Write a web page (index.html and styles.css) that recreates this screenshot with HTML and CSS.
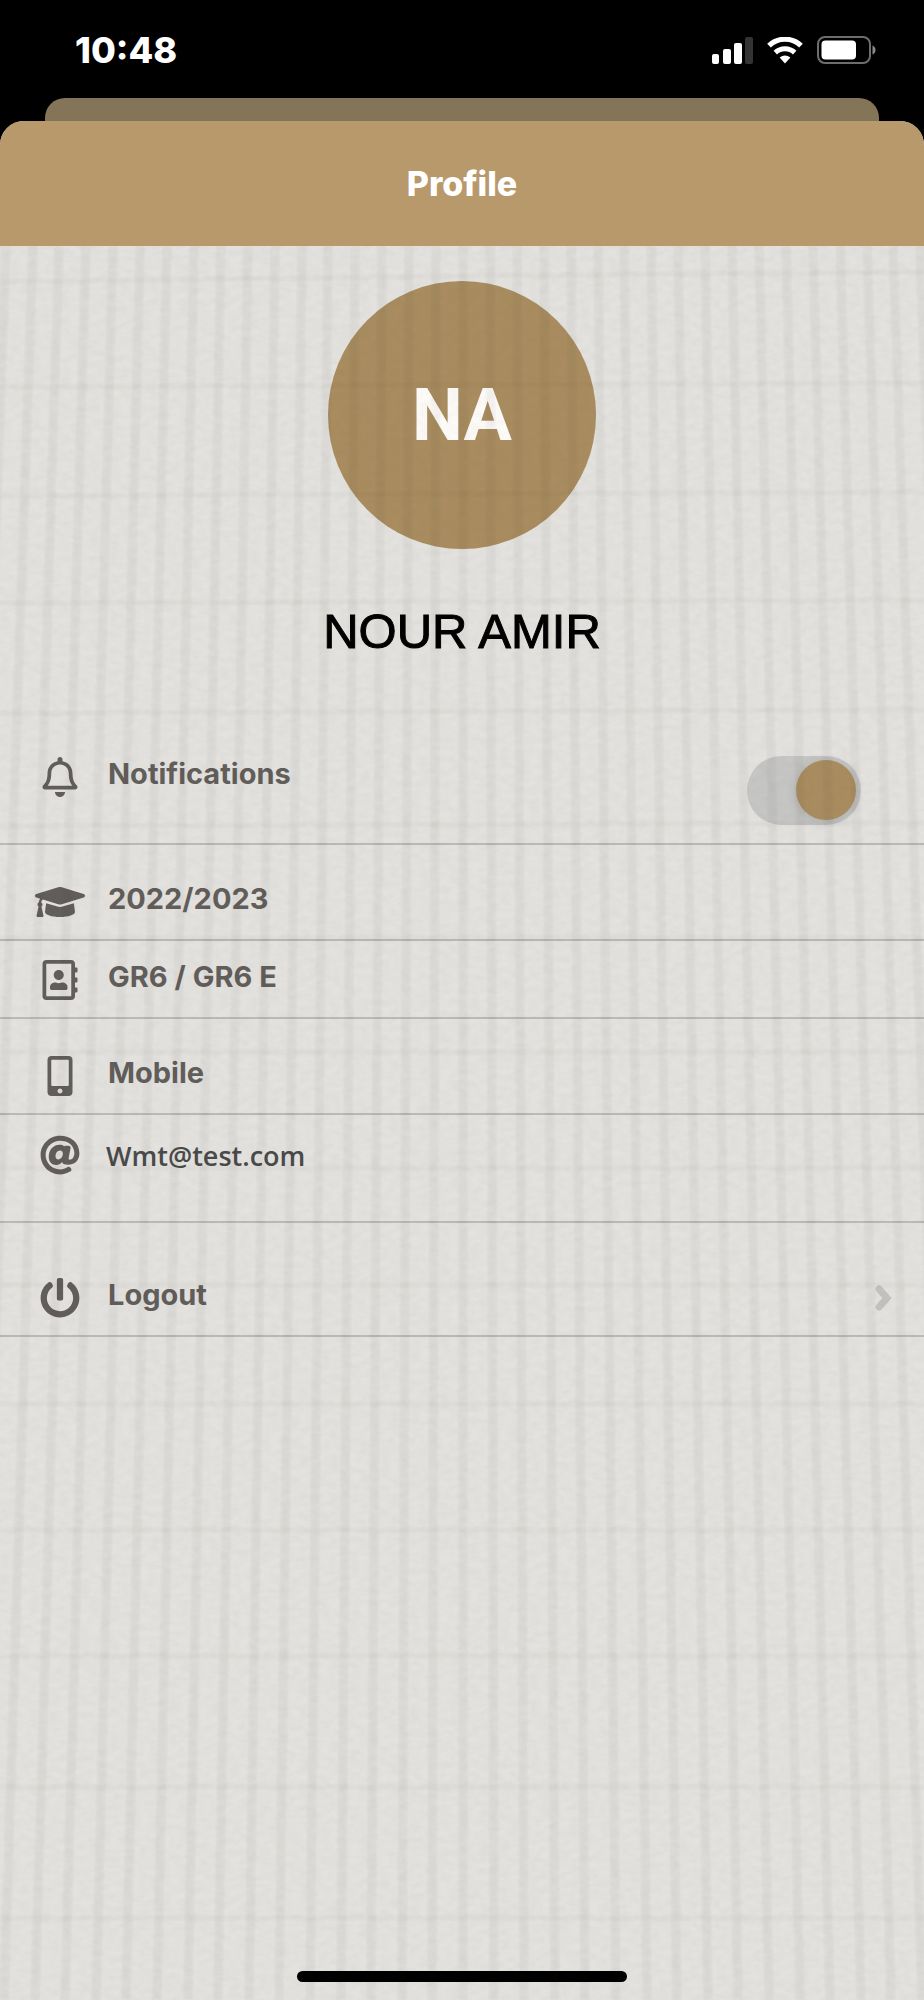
FILE: index.html
```html
<!DOCTYPE html>
<html lang="en">
<head>
<meta charset="utf-8">
<meta name="viewport" content="width=device-width, initial-scale=1">
<title>Profile</title>
<link rel="stylesheet" href="styles.css">
</head>
<body class="screen">
  <div class="status">
    <time class="status-time">10:48</time>
    <div class="status-icons">
      <svg class="signal" width="41" height="27" viewBox="0 0 41 27" aria-hidden="true">
        <rect x="0" y="17" width="7" height="10" rx="2" fill="#fff"/>
        <rect x="11" y="12" width="8" height="15" rx="2" fill="#fff"/>
        <rect x="22" y="6" width="8" height="21" rx="2" fill="#fff"/>
        <rect x="33" y="0" width="8" height="27" rx="2" fill="#333"/>
      </svg>
      <svg class="wifi" width="36" height="27" viewBox="0 0 36 27" aria-hidden="true">
        <path d="M2 8.700A23 23 0 0 1 34 8.700" fill="none" stroke="#fff" stroke-width="5.200"/>
        <path d="M8.300 15.600A14 14 0 0 1 27.700 15.600" fill="none" stroke="#fff" stroke-width="5"/>
        <path d="M12.600 20.600Q18 16.600 23.400 20.600L18 26.500Z" fill="#fff"/>
      </svg>
      <svg class="battery" width="60" height="28" viewBox="0 0 60 28" aria-hidden="true">
        <rect x="1" y="1" width="52" height="26" rx="7" fill="none" stroke="#6d6d6d" stroke-width="2"/>
        <rect x="4.500" y="4.500" width="34.500" height="19" rx="4" fill="#fff"/>
        <path d="M55.500 9.500Q58.500 11 58.500 14T55.500 18.500Z" fill="#8a8a8a"/>
      </svg>
    </div>
  </div>
  <div class="back-sheet"></div>
  <main class="sheet">
    <header class="sheet-header"><h1 class="title">Profile</h1></header>
    <div class="content">
      <div class="avatar">NA</div>
      <h2 class="name">NOUR AMIR</h2>
      <ul class="rows">
        <li class="row row-switch">
          <svg class="icon" viewBox="-96 0 640 512" aria-hidden="true"><path d="M439.390 362.290c-19.320-20.760-55.470-51.990-55.470-154.290 0-77.700-54.480-139.900-127.940-155.160V32c0-17.670-14.320-32-31.980-32s-31.980 14.330-31.980 32v20.840C118.560 68.100 64.080 130.300 64.080 208c0 102.300-36.150 133.530-55.470 154.290-6 6.450-8.660 14.160-8.610 21.710.110 16.400 12.980 32 32.100 32h383.800c19.120 0 32-15.600 32.100-32 .050-7.550-2.610-15.270-8.610-21.710zM67.530 368c21.220-27.970 44.420-74.330 44.530-159.420 0-.200-.060-.380-.060-.580 0-61.860 50.140-112 112-112s112 50.140 112 112c0 .200-.060.380-.060.580.110 85.100 23.310 131.460 44.530 159.420H67.530zM224 512c35.320 0 63.970-28.650 63.970-64H160.030c0 35.350 28.650 64 63.970 64z"/></svg>
          <label class="label" for="notify">Notifications</label>
          <input class="switch" id="notify" type="checkbox" role="switch" checked>
        </li>
        <li class="row row-tall">
          <svg class="icon" viewBox="0 0 640 512" aria-hidden="true"><path d="M622.340 153.200L343.400 67.500c-15.200-4.670-31.600-4.670-46.790 0L17.660 153.200c-23.540 7.230-23.540 38.360 0 45.590l48.630 14.940c-10.670 13.190-17.230 29.280-17.880 46.900C38.780 266.150 32 276.110 32 288c0 10.780 5.680 19.850 13.860 25.650L20.330 428.530C18.110 438.520 25.710 448 35.940 448h56.110c10.240 0 17.840-9.480 15.620-19.470L82.140 313.650C90.320 307.850 96 298.780 96 288c0-11.570-6.470-21.250-15.660-26.870.760-15.020 8.440-28.300 20.690-36.720L296.600 284.500c9.060 2.780 26.440 6.250 46.790 0l278.950-85.700c23.550-7.240 23.550-38.360 0-45.600zM352.790 315.090c-28.530 8.760-52.840 3.920-65.590 0l-145.020-44.550L128 384c0 35.350 85.960 64 192 64s192-28.650 192-64l-14.180-113.470-145.030 44.560z"/></svg>
          <span class="label">2022/2023</span>
        </li>
        <li class="row row-short">
          <svg class="icon" viewBox="-96 0 640 512" aria-hidden="true"><path d="M436 160c6.600 0 12-5.400 12-12v-40c0-6.600-5.400-12-12-12h-20V48c0-26.500-21.500-48-48-48H48C21.500 0 0 21.500 0 48v416c0 26.500 21.500 48 48 48h320c26.500 0 48-21.500 48-48v-48h20c6.600 0 12-5.400 12-12v-40c0-6.600-5.400-12-12-12h-20v-64h20c6.600 0 12-5.400 12-12v-40c0-6.600-5.400-12-12-12h-20v-64h20zm-68 304H48V48h320v416zM208 256c35.300 0 64-28.700 64-64s-28.700-64-64-64-64 28.700-64 64 28.700 64 64 64zm-89.600 128h179.200c12.400 0 22.400-8.600 22.400-19.200v-19.200c0-31.800-30.100-57.600-67.200-57.600-10.800 0-18.700 8-44.800 8-26.900 0-33.400-8-44.800-8-37.100 0-67.200 25.800-67.200 57.600v19.200c0 10.600 10 19.200 22.400 19.200z"/></svg>
          <span class="label">GR6 / GR6 E</span>
        </li>
        <li class="row row-tall">
          <svg class="icon" viewBox="-160 0 640 512" aria-hidden="true"><path d="M272 0H48C21.500 0 0 21.500 0 48v416c0 26.500 21.500 48 48 48h224c26.500 0 48-21.500 48-48V48c0-26.500-21.500-48-48-48zM160 480c-17.700 0-32-14.300-32-32s14.300-32 32-32 32 14.300 32 32-14.300 32-32 32zm112-108c0 6.600-5.400 12-12 12H60c-6.600 0-12-5.400-12-12V60c0-6.600 5.400-12 12-12h200c6.600 0 12 5.400 12 12v312z"/></svg>
          <span class="label">Mobile</span>
        </li>
        <li class="row row-email">
          <svg class="icon" viewBox="-64 0 640 512" aria-hidden="true"><path d="M256 8C118.941 8 8 118.919 8 256c0 137.059 110.919 248 248 248 48.154 0 95.342-14.140 135.408-40.223 12.005-7.815 14.625-24.288 5.552-35.372l-10.177-12.433c-7.671-9.371-21.179-11.667-31.373-5.129C325.920 429.757 291.314 440 256 440c-101.458 0-184-82.542-184-184S154.542 72 256 72c100.139 0 184 57.619 184 160 0 38.786-21.093 79.742-58.170 83.693-17.349-.454-16.910-12.857-13.476-30.024l23.433-121.110C394.653 149.750 383.308 136 368.225 136h-44.981a13.518 13.518 0 0 0-13.432 11.993l-.010.092c-14.697-17.901-40.448-21.775-59.971-21.775-74.580 0-137.831 62.234-137.831 151.460 0 65.303 36.785 105.870 96 105.870 26.984 0 57.369-15.637 74.991-38.333 9.522 34.104 40.613 34.104 70.710 34.104C462.609 379.410 504 307.798 504 232 504 95.653 394.023 8 256 8zm-21.680 304.430c-22.249 0-36.070-15.623-36.070-40.771 0-44.993 30.779-72.729 58.630-72.729 22.292 0 35.601 15.241 35.601 40.770 0 45.061-33.875 72.730-58.161 72.730z"/></svg>
          <span class="label label-email">Wmt@test.com</span>
        </li>
        <li>
          <button class="row row-logout" type="button">
            <svg class="icon" viewBox="-64 0 640 512" aria-hidden="true"><path d="M400 54.100c63 45 104 118.600 104 201.900 0 136.800-110.800 247.700-247.500 248C120 504.300 8.200 393 8 256.400 7.900 173.100 48.900 99.300 111.800 54.200c11.700-8.300 28-4.800 35 7.700L162.600 90c5.900 10.500 3.100 23.800-6.600 31-41.500 30.800-68 79.600-68 134.900-.100 92.300 74.500 168.100 168 168.100 91.600 0 168.600-74.200 168-169.100-.300-51.800-24.700-101.800-68.100-134-9.700-7.200-12.400-20.500-6.500-30.900l15.800-28.100c7-12.400 23.200-16.100 34.800-7.800zM296 264V24c0-13.300-10.700-24-24-24h-32c-13.300 0-24 10.700-24 24v240c0 13.300 10.700 24 24 24h32c13.300 0 24-10.700 24-24z"/></svg>
            <span class="label">Logout</span>
            <svg class="chevron" width="18" height="40" viewBox="0 0 18 40" aria-hidden="true"><path d="M5 11L13 20L5 29" fill="none" stroke="#c2c2c0" stroke-width="7" stroke-linecap="round"/></svg>
          </button>
        </li>
      </ul>
      <div class="home-bar"></div>
      <svg class="wall" viewBox="0 246 924 1754" preserveAspectRatio="none" aria-hidden="true">
        <defs>
          <filter id="grain" x="0" y="0" width="100%" height="100%" color-interpolation-filters="sRGB">
            <feTurbulence type="fractalNoise" baseFrequency="0.100 0.160" numOctaves="3" seed="4"/>
            <feColorMatrix values="0 0 0 0 .300  0 0 0 0 .280  0 0 0 0 .250  2.400 0 0 0 -.700"/>
          </filter>
          <filter id="soft" filterUnits="userSpaceOnUse" x="-20" y="230" width="964" height="1790" color-interpolation-filters="sRGB"><feGaussianBlur stdDeviation="1.300"/></filter>
        </defs>
        <g opacity=".022"><rect x="0" y="246" width="924" height="1754" filter="url(#grain)"/></g>
        <g opacity=".036"><path filter="url(#soft)" fill="none" stroke="#301c16" stroke-width="9" d="M463 246V2000M436 246L432 2000M409 246L402 2000M382 246L371 2000M355 246L341 2000M328 246L310 2000M302 246L279 2000M275 246L249 2000M248 246L218 2000M221 246L188 2000M194 246L157 2000M167 246L126 2000M140 246L96 2000M113 246L65 2000M86 246L35 2000M59 246L4 2000M33 246L-27 2000M6 246L-57 2000M490 246L494 2000M517 246L524 2000M544 246L555 2000M571 246L585 2000M598 246L616 2000M624 246L647 2000M651 246L677 2000M678 246L708 2000M705 246L738 2000M732 246L769 2000M759 246L800 2000M786 246L830 2000M813 246L861 2000M840 246L891 2000M867 246L922 2000M893 246L953 2000M920 246L983 2000"/></g>
        <g opacity=".025"><path filter="url(#soft)" fill="none" stroke="#301c16" stroke-width="5" d="M0 282L462 276L924 272M0 387L924 383M0 496L924 492M0 603L924 600M0 713L924 710M0 826L924 823M0 938H924M0 1052H924M0 1168H924M0 1285H924M0 1404H924M0 1530H924M0 1656H924M0 1787H924M0 1918H924"/></g>
      </svg>
    </div>
  </main>
</body>
</html>
```

FILE: styles.css
```css
* { box-sizing: border-box; }

.screen {
  margin: 0;
  min-height: 100vh;
  display: flex;
  flex-direction: column;
  background: #000;
  font-family: Inter, "Liberation Sans", sans-serif;
}

.status {
  display: flex;
  align-items: center;
  justify-content: space-between;
  padding: 30px 47px 28px 75px;
  color: #fff;
}
.status-time { font-size: 36px; line-height: 40px; font-weight: 800; }
.status-icons { display: flex; align-items: center; gap: 14px; }

.back-sheet {
  height: 48px;
  margin: 0 45px -25px;
  border-radius: 20px 20px 0 0;
  background: #857558;
}

.sheet {
  flex: 1;
  position: relative;
  display: flex;
  flex-direction: column;
  overflow: hidden;
  border-radius: 24px 24px 0 0;
  background: #e3e2de;
}
.sheet-header { padding: 43px 24px 42px; background: #b8996b; text-align: center; }
.title { margin: 0; color: #fff; font-size: 34px; line-height: 40px; font-weight: 800; }

.content {
  flex: 1;
  position: relative;
  display: flex;
  flex-direction: column;
  align-items: center;
  padding: 35px 0 18px;
}
.avatar {
  display: grid;
  place-items: center;
  width: 268px;
  height: 268px;
  padding-top: 2px;
  border-radius: 50%;
  background: #a98d60;
  color: #fcfbf8;
  font: 700 72px/80px Roboto, "Liberation Sans", sans-serif;
}
.name {
  margin: 54px 0 61px;
  color: #000;
  font: 400 49px/56px "Liberation Sans", Arial, sans-serif;
  -webkit-text-stroke: 1px #000;
}

.rows { width: 100%; margin: 0; padding: 0; list-style: none; }
.row {
  display: flex;
  align-items: flex-start;
  gap: 23px;
  width: 100%;
  padding: 36px 32px 22px 35px;
  border: 0 solid #babab9;
  border-bottom-width: 2px;
  background: none;
  color: #625e5b;
  font: 700 29px/36px Inter, "Liberation Sans", sans-serif;
  text-align: left;
}
.row-switch { padding: 36px 63px 18px 35px; }
.row-short { padding-top: 18px; }
.row-email { padding-top: 20px; padding-bottom: 44px; gap: 21px; }
.row-logout { padding-top: 54px; }

.icon { flex: none; width: 50px; height: 40px; margin: 1px 0 -5px; fill: currentColor; }
.row-email .icon { margin-top: 0; }
.label { flex: 1; }
.label-email {
  color: #4a4a4b;
  font: 600 27px/42px "Open Sans", "Noto Sans", sans-serif;
}
.chevron { flex: none; margin: 1px 0 -5px; }

.switch {
  appearance: none;
  flex: none;
  display: flex;
  width: 114px;
  height: 69px;
  margin: 0;
  padding: 4px 5px;
  border-radius: 35px;
  background: #c6c6c5;
}
.switch::before {
  content: "";
  width: 60px;
  height: 60px;
  border-radius: 50%;
  background: #a98d60;
  box-shadow: 0 2px 12px rgba(0, 0, 0, .12);
}
.switch:checked { justify-content: flex-end; }

.home-bar {
  width: 330px;
  max-width: 80%;
  height: 11px;
  margin-top: auto;
  border-radius: 6px;
  background: #000;
}

/* Wall relief laid over the whole panel */
.wall {
  position: absolute;
  inset: 0;
  width: 100%;
  height: 100%;
  pointer-events: none;
}
```
